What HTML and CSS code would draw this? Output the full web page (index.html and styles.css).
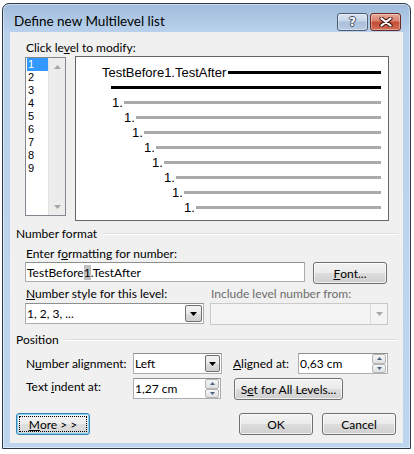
FILE: index.html
```html
<!DOCTYPE html>
<html>
<head>
<meta charset="utf-8">
<title>Define new Multilevel list</title>
<link rel="stylesheet" href="styles.css">
</head>
<body>
<div class="window">
  <div class="titlebar">
    <span class="title">Define new Multilevel list</span>
    <div class="caption-buttons">
      <div class="cap cap-help"><span class="qmark">?</span></div>
      <div class="cap cap-close">
        <svg width="14" height="10" viewBox="0 0 14 10">
          <path d="M2.5 1.5 L11.5 8.5 M11.5 1.5 L2.5 8.5" stroke="#4b1e15" stroke-width="4.2" stroke-linecap="round"/>
          <path d="M2.5 1.5 L11.5 8.5 M11.5 1.5 L2.5 8.5" stroke="#fff" stroke-width="2.2" stroke-linecap="round"/>
        </svg>
      </div>
    </div>
  </div>

  <div class="client">
    <div class="section">
      <div class="label">Click le<u>v</u>el to modify:</div>
      <div class="levels">
        <div class="listbox">
          <ul class="level-items">
            <li class="selected">1</li>
            <li>2</li>
            <li>3</li>
            <li>4</li>
            <li>5</li>
            <li>6</li>
            <li>7</li>
            <li>8</li>
            <li>9</li>
          </ul>
          <div class="vscroll">
            <div class="sb-arrow"><svg width="7" height="4" viewBox="0 0 7 4"><path d="M0 4 L3.5 0 L7 4 Z" fill="#a6a6a6"/></svg></div>
            <div class="sb-arrow"><svg width="7" height="4" viewBox="0 0 7 4"><path d="M0 0 L7 0 L3.5 4 Z" fill="#a6a6a6"/></svg></div>
          </div>
        </div>
        <div class="preview">
          <div class="pv-row pv-head"><span class="pv-text">TestBefore1.TestAfter</span><span class="bar bar-dark bar-after"></span></div>
          <div class="pv-row pv-second"><span class="bar bar-dark"></span></div>
          <div class="pv-row lvl-1"><span class="pv-num">1.</span><span class="bar bar-gray"></span></div>
          <div class="pv-row lvl-2"><span class="pv-num">1.</span><span class="bar bar-gray"></span></div>
          <div class="pv-row lvl-3"><span class="pv-num">1.</span><span class="bar bar-gray"></span></div>
          <div class="pv-row lvl-4"><span class="pv-num">1.</span><span class="bar bar-gray"></span></div>
          <div class="pv-row lvl-5"><span class="pv-num">1.</span><span class="bar bar-gray"></span></div>
          <div class="pv-row lvl-6"><span class="pv-num">1.</span><span class="bar bar-gray"></span></div>
          <div class="pv-row lvl-7"><span class="pv-num">1.</span><span class="bar bar-gray"></span></div>
          <div class="pv-row lvl-8"><span class="pv-num">1.</span><span class="bar bar-gray"></span></div>
        </div>
      </div>
    </div>

    <div class="group-head"><span>Number format</span><span class="rule"></span></div>

    <div class="section">
      <div class="label gap-5">Enter f<u>o</u>rmatting for number:</div>
      <div class="row format-row">
        <div class="textbox format-box">TestBefore<span class="field-shade">1</span>.TestAfter</div>
        <div class="button font-btn"><u>F</u>ont...</div>
      </div>
      <div class="row style-row">
        <div class="col col-style">
          <div class="label"><u>N</u>umber style for this level:</div>
          <div class="combo style-combo">
            <span class="combo-text">1, 2, 3, ...</span>
            <span class="drop"><svg width="7" height="4" viewBox="0 0 7 4"><path d="M0 0 L7 0 L3.5 4 Z" fill="#000"/></svg></span>
          </div>
        </div>
        <div class="col col-include">
          <div class="label disabled">Include level number from:</div>
          <div class="combo combo-disabled">
            <span class="combo-text"></span>
            <span class="drop drop-disabled"><svg width="7" height="4" viewBox="0 0 7 4"><path d="M0 0 L7 0 L3.5 4 Z" fill="#a8a8a8"/></svg></span>
          </div>
        </div>
      </div>
    </div>

    <div class="group-head position-head"><span>Position</span><span class="rule"></span></div>

    <div class="section">
      <div class="row pos-row pos-row-1">
        <span class="pos-label">N<u>u</u>mber alignment:</span>
        <div class="combo align-combo">
          <span class="combo-text">Left</span>
          <span class="drop drop-small"><svg width="7" height="4" viewBox="0 0 7 4"><path d="M0 0 L7 0 L3.5 4 Z" fill="#000"/></svg></span>
        </div>
        <span class="pos-label2"><u>A</u>ligned at:</span>
        <div class="spin aligned-spin">
          <span class="spin-text">0,63 cm</span>
          <span class="spin-btns">
            <span class="spin-btn"><svg width="5" height="3" viewBox="0 0 5 3"><path d="M0 3 L2.5 0 L5 3 Z" fill="#4e6180"/></svg></span>
            <span class="spin-btn"><svg width="5" height="3" viewBox="0 0 5 3"><path d="M0 0 L5 0 L2.5 3 Z" fill="#4e6180"/></svg></span>
          </span>
        </div>
      </div>
      <div class="row pos-row pos-row-2">
        <span class="pos-label">Text <u>i</u>ndent at:</span>
        <div class="spin indent-spin">
          <span class="spin-text">1,27 cm</span>
          <span class="spin-btns">
            <span class="spin-btn"><svg width="5" height="3" viewBox="0 0 5 3"><path d="M0 3 L2.5 0 L5 3 Z" fill="#4e6180"/></svg></span>
            <span class="spin-btn"><svg width="5" height="3" viewBox="0 0 5 3"><path d="M0 0 L5 0 L2.5 3 Z" fill="#4e6180"/></svg></span>
          </span>
        </div>
        <div class="button levels-btn">S<u>e</u>t for All Levels...</div>
      </div>
    </div>

    <div class="row dialog-buttons">
      <div class="button default-btn"><span class="focus-ring"><u>M</u>ore &gt; &gt;</span></div>
      <div class="button ok-btn">OK</div>
      <div class="button cancel-btn">Cancel</div>
    </div>
  </div>
</div>
</body>
</html>
```

FILE: styles.css
```css
* {
  box-sizing: border-box;
}

html,
body {
  margin: 0;
  background: #fff;
}

body {
  font-family: Lato, "Noto Sans", "DejaVu Sans", sans-serif;
  font-size: 12px;
  color: #000;
}

u {
  text-decoration: underline;
  text-underline-offset: 1px;
}

/* ---------- window frame ---------- */

.window {
  margin: 3px 0 0 2px;
  width: 409px;
  height: 446px;
  border: 1px solid #2f3a48;
  border-radius: 7px 7px 0 0;
  background: linear-gradient(to bottom, #a0bcdb 0, #b2cbe7 20px, #bad2ec 30px, #bdd5ef 100%);
  box-shadow: inset 0 0 0 1px rgba(255, 255, 255, 0.45);
  display: flex;
  flex-direction: column;
  overflow: hidden;
}

.titlebar {
  height: 28px;
  flex: none;
  display: flex;
  align-items: flex-start;
  padding: 9px 0 0 11px;
}

.title {
  flex: 1;
  line-height: 16px;
  font-size: 13.5px;
}

.caption-buttons {
  display: flex;
  gap: 2px;
  margin: 0 9px 0 0;
}

.cap {
  width: 31px;
  height: 18px;
  border-radius: 3px;
  border: 1px solid #4d5d72;
  display: flex;
  align-items: center;
  justify-content: center;
  box-shadow: inset 0 0 0 1px rgba(255, 255, 255, 0.35);
}

.cap-help {
  background: linear-gradient(to bottom, #dbe5f1 0, #c4d4e7 45%, #a9bfda 50%, #b8cbe2 100%);
}

.cap-close {
  border-color: #6a2a1f;
  background: linear-gradient(to bottom, #e6a898 0, #d9806c 45%, #c34a31 50%, #d0705a 100%);
}

.qmark {
  font-family: "DejaVu Sans", sans-serif;
  font-weight: bold;
  font-size: 12px;
  line-height: 12px;
  color: #fff;
  text-shadow: 1px 0 0 #3c4a5e, -1px 0 0 #3c4a5e, 0 1px 0 #3c4a5e, 0 -1px 0 #3c4a5e;
}

.cap-close svg {
  display: block;
}

/* ---------- client area ---------- */

.client {
  flex: 1;
  margin: 0 7px 5px;
  background: #f0f0f0;
  padding: 8px 5px 0 6px;
  display: flex;
  flex-direction: column;
}

.section {
  padding: 0 9px;
}

.label {
  line-height: 15px;
  padding-left: 1px;
  white-space: nowrap;
}

.label.disabled {
  color: #6d6d6d;
}

.gap-5 {
  margin-top: 5px;
}

.row {
  display: flex;
  align-items: flex-start;
}

/* ---------- level list + preview ---------- */

.levels {
  display: flex;
  align-items: flex-start;
  gap: 9px;
  margin-top: 1px;
}

.listbox {
  width: 41px;
  height: 159px;
  margin-top: 1px;
  border: 1px solid #828790;
  background: #fff;
  display: flex;
}

.level-items {
  list-style: none;
  margin: 0;
  padding: 0;
  width: 22px;
  font-family: "Liberation Sans", Arial, sans-serif;
  font-size: 11px;
}

.level-items li {
  line-height: 13px;
  height: 13px;
  padding-left: 2px;
}

.level-items li.selected {
  margin-left: 1px;
  padding-left: 1px;
  background: #3399ff;
  color: #fff;
}

.vscroll {
  width: 17px;
  background: #ececec;
  border-left: 1px solid #e2e2e2;
  display: flex;
  flex-direction: column;
  justify-content: space-between;
}

.sb-arrow {
  height: 17px;
  display: flex;
  align-items: center;
  justify-content: center;
}

.sb-arrow svg {
  display: block;
}

.preview {
  flex: 1;
  height: 165px;
  border: 1px solid #666;
  background: #fff;
  padding: 8px 7px 0 0;
  font-family: "Liberation Sans", Arial, sans-serif;
  font-size: 13px;
}

.pv-row {
  display: flex;
  align-items: center;
  height: 15px;
  line-height: 15px;
}

.pv-head {
  padding-left: 26px;
}

.pv-text {
  white-space: nowrap;
}

.bar {
  flex: 1;
  height: 3px;
}

.bar-dark {
  background: #000;
}

.bar-after {
  margin-left: 2px;
}

.bar-gray {
  background: #aaa;
  margin-left: 1px;
}

.pv-second { padding-left: 35px; }
.lvl-1 { padding-left: 36px; }
.lvl-2 { padding-left: 48px; }
.lvl-3 { padding-left: 56px; }
.lvl-4 { padding-left: 68px; }
.lvl-5 { padding-left: 76px; }
.lvl-6 { padding-left: 88px; }
.lvl-7 { padding-left: 96px; }
.lvl-8 { padding-left: 108px; }

.pv-num {
  width: 11px;
  white-space: nowrap;
}

/* ---------- group headings ---------- */

.group-head {
  display: flex;
  align-items: center;
  line-height: 15px;
  margin-top: 5px;
}

.position-head {
  margin-top: 7px;
}

.group-head .rule {
  flex: 1;
  margin-left: 6px;
  border-top: 1px solid #d5dfe5;
  border-bottom: 1px solid #fff;
}

/* ---------- controls ---------- */

.textbox,
.combo,
.spin {
  background: #fff;
  border: 1px solid #abadb3;
  border-top-color: #8e8f8f;
  display: flex;
  align-items: center;
  white-space: nowrap;
}

.format-row {
  margin-top: 1px;
}

.format-box {
  width: 280px;
  height: 20px;
  padding-left: 1px;
}

.field-shade {
  background: #c0c0c0;
}

.button {
  height: 22px;
  border: 1px solid #707070;
  border-radius: 3px;
  background: linear-gradient(to bottom, #f2f2f2 0, #ebebeb 50%, #dddddd 50%, #cfcfcf 100%);
  box-shadow: inset 0 0 0 1px rgba(255, 255, 255, 0.7);
  display: flex;
  align-items: center;
  justify-content: center;
  white-space: nowrap;
  width: 74px;
}

.font-btn {
  margin-left: 8px;
}

.style-row {
  margin-top: 2px;
}

.col-style {
  width: 179px;
}

.col-include {
  width: 178px;
  margin-left: 6px;
}

.col .combo {
  margin-top: 2px;
}

.combo {
  height: 21px;
  padding-left: 1px;
}

.combo-text {
  flex: 1;
}

.style-combo {
  width: 179px;
}

.drop {
  width: 17px;
  height: 17px;
  margin-right: 1px;
  border: 1px solid #707070;
  border-radius: 2px;
  background: linear-gradient(to bottom, #f2f2f2 0, #ebebeb 50%, #dddddd 50%, #cfcfcf 100%);
  display: flex;
  align-items: center;
  justify-content: center;
}

.drop svg {
  display: block;
}

.combo-disabled {
  height: 22px;
  background: #f4f4f4;
  border-color: #c9c9c9;
}

.drop-disabled {
  height: 20px;
  margin-right: 0;
  border: none;
  border-left: 1px solid #dcdcdc;
  border-radius: 0;
  background: #f4f4f4;
}

.drop-small {
  width: 15px;
}

/* ---------- position rows ---------- */

.pos-row-1 {
  margin-top: 6px;
  align-items: center;
}

.pos-row-2 {
  margin-top: 4px;
}

.pos-label {
  width: 108px;
  padding-left: 1px;
  line-height: 17px;
  white-space: nowrap;
}

.pos-row-2 .pos-label {
  line-height: 18px;
}

.align-combo {
  width: 89px;
  height: 21px;
}

.pos-label2 {
  width: 65px;
  margin-left: 11px;
  white-space: nowrap;
}

.spin {
  height: 21px;
  padding-left: 1px;
}

.aligned-spin {
  width: 90px;
}

.indent-spin {
  width: 88px;
}

.spin-text {
  flex: 1;
}

.spin-btns {
  display: flex;
  flex-direction: column;
  width: 14px;
  height: 19px;
  margin-right: 1px;
}

.spin-btn {
  flex: 1;
  border: 1px solid #b4b4b4;
  border-radius: 2px;
  background: linear-gradient(to bottom, #f6f6f6, #e0e0e0);
  display: flex;
  align-items: center;
  justify-content: center;
}

.spin-btn svg {
  display: block;
}

.levels-btn {
  width: 109px;
  margin-left: 13px;
}

/* ---------- dialog buttons ---------- */

.dialog-buttons {
  margin-top: 13px;
  padding-right: 2px;
}

.default-btn {
  border-color: #3c7fb1;
  box-shadow: inset 0 0 0 1px #7fd4f5;
  background: linear-gradient(to bottom, #f4f4f4 0, #ececec 50%, #e0e0e0 50%, #d6d6d6 100%);
  padding: 2px;
}

.focus-ring {
  flex: 1;
  align-self: stretch;
  border: 1px dotted #000;
  display: flex;
  align-items: center;
  justify-content: center;
}

.ok-btn {
  margin-left: auto;
}

.cancel-btn {
  margin-left: 9px;
}
```
